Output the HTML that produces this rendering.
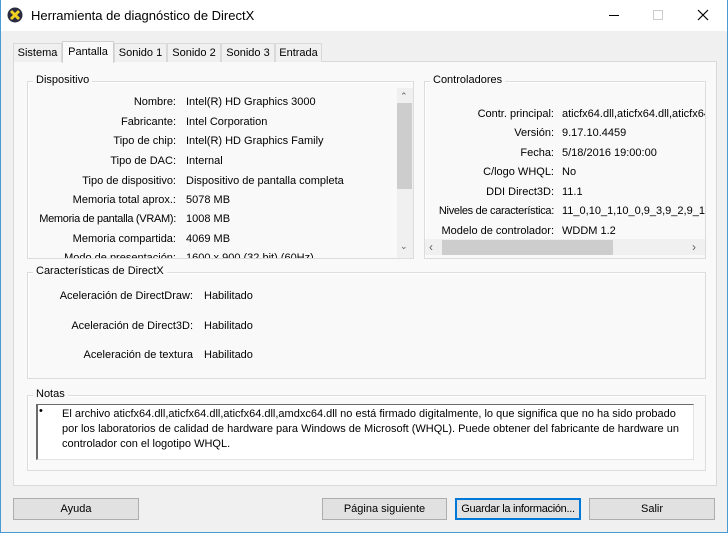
<!DOCTYPE html>
<html><head><meta charset="utf-8"><style>
*{margin:0;padding:0;box-sizing:border-box}
body{width:728px;height:533px;background:#f0f0f0;font-family:"Liberation Sans",sans-serif;font-size:11px;color:#000;position:relative;overflow:hidden;white-space:nowrap}
.a{position:absolute}
.win{left:0;top:0;width:728px;height:533px;border:1px solid #4a9ad6;border-top:none}
.title{left:1px;top:0;width:726px;height:31px;background:#fff}
.gb{position:absolute;border:1px solid #dcdcdc;box-shadow:inset 1px 1px 0 #fff}
.gbt{position:absolute;background:#f9f9f9;padding:0 3px;top:-8px;left:5px;font-size:11px}
.l{position:absolute;text-align:right;white-space:nowrap}
.v{position:absolute;white-space:nowrap}
.tab{position:absolute;top:43px;height:19px;border:1px solid #d9d9d9;border-bottom:none;background:#f0f0f0;padding:3px 0 0 0;text-align:center;font-size:11px;white-space:nowrap}
.btn{position:absolute;top:498px;height:22px;border:1px solid #adadad;background:#e1e1e1;text-align:center;line-height:20px;white-space:nowrap;font-size:11px}
.d{position:absolute;left:0;top:1px}
</style></head><body>
<div class="a win"></div>
<div class="a title"></div>
<svg class="a" style="left:7px;top:7px" width="16" height="16" viewBox="0 0 16 16"><circle cx="8" cy="8" r="7.5" fill="#2a2a40"/><path d="M4 4 L12 12 M12 4 L4 12" stroke="#f0d020" stroke-width="3"/></svg>
<div class="a" style="left:31px;top:8px;font-size:13px">Herramienta de diagnóstico de DirectX</div>
<div class="a" style="left:609px;top:15px;width:10px;height:1px;background:#000"></div>
<div class="a" style="left:653px;top:10px;width:10px;height:10px;border:1px solid #ccc"></div>
<svg class="a" style="left:697px;top:9px" width="12" height="12"><path d="M1 1L11 11M11 1L1 11" stroke="#000" stroke-width="1.2"/></svg>
<div class="a" style="left:13px;top:61px;width:704px;height:425px;border:1px solid #d9d9d9;background:#f9f9f9"></div>
<div class="tab" style="left:13px;width:49px">Sistema</div>
<div class="tab" style="left:62px;top:41px;height:22px;width:52px;background:#f9f9f9;border-color:#d0d0d0;padding-top:4px">Pantalla</div>
<div class="tab" style="left:114px;width:53px">Sonido 1</div>
<div class="tab" style="left:167px;width:54px">Sonido 2</div>
<div class="tab" style="left:221px;width:54px">Sonido 3</div>
<div class="tab" style="left:275px;width:47px">Entrada</div>
<div class="gb" style="left:27px;top:81px;width:387px;height:178px"><span class="gbt">Dispositivo</span></div>
<div class="a" style="left:28px;top:88px;width:368px;height:170px;overflow:hidden">
<div class="l" style="right:220px;top:8px">Nombre:</div><div class="v" style="left:158px;top:8px">Intel(R) HD Graphics 3000</div>
<div class="l" style="right:220px;top:28px">Fabricante:</div><div class="v" style="left:158px;top:28px">Intel Corporation</div>
<div class="l" style="right:220px;top:47px">Tipo de chip:</div><div class="v" style="left:158px;top:47px">Intel(R) HD Graphics Family</div>
<div class="l" style="right:220px;top:67px">Tipo de DAC:</div><div class="v" style="left:158px;top:67px">Internal</div>
<div class="l" style="right:220px;top:87px">Tipo de dispositivo:</div><div class="v" style="left:158px;top:87px">Dispositivo de pantalla completa</div>
<div class="l" style="right:220px;top:106px">Memoria total aprox.:</div><div class="v" style="left:158px;top:106px">5078 MB</div>
<div class="l" style="right:220px;top:125px;letter-spacing:-0.3px">Memoria de pantalla (VRAM):</div><div class="v" style="left:158px;top:125px">1008 MB</div>
<div class="l" style="right:220px;top:145px">Memoria compartida:</div><div class="v" style="left:158px;top:145px">4069 MB</div>
<div class="l" style="right:220px;top:164px">Modo de presentación:</div><div class="v" style="left:158px;top:164px">1600 x 900 (32 bit) (60Hz)</div>
</div>
<div class="a" style="left:397px;top:88px;width:16px;height:170px;background:#f0f0f0"></div>
<div class="a" style="left:397px;top:103px;width:15px;height:86px;background:#cdcdcd"></div>
<div class="a" style="left:400px;top:91px;font-size:9px;color:#606060">&#8963;</div>
<div class="a" style="left:400px;top:241px;font-size:9px;color:#606060">&#8964;</div>
<div class="gb" style="left:424px;top:81px;width:282px;height:178px"><span class="gbt">Controladores</span></div>
<div class="a" style="left:425px;top:88px;width:280px;height:151px;overflow:hidden">
<div class="l" style="right:151px;top:20px">Contr. principal:</div><div class="v" style="left:137px;top:20px">aticfx64.dll,aticfx64.dll,aticfx64.dll</div>
<div class="l" style="right:151px;top:39px">Versión:</div><div class="v" style="left:137px;top:39px">9.17.10.4459</div>
<div class="l" style="right:151px;top:59px">Fecha:</div><div class="v" style="left:137px;top:59px">5/18/2016 19:00:00</div>
<div class="l" style="right:151px;top:78px">C/logo WHQL:</div><div class="v" style="left:137px;top:78px">No</div>
<div class="l" style="right:151px;top:98px">DDI Direct3D:</div><div class="v" style="left:137px;top:98px">11.1</div>
<div class="l" style="right:151px;top:117px;letter-spacing:-0.3px">Niveles de característica:</div><div class="v" style="left:137px;top:117px">11_0,10_1,10_0,9_3,9_2,9_1</div>
<div class="l" style="right:151px;top:137px">Modelo de controlador:</div><div class="v" style="left:137px;top:137px">WDDM 1.2</div>
</div>
<div class="a" style="left:425px;top:239px;width:280px;height:16px;background:#f0f0f0"></div>
<div class="a" style="left:442px;top:240px;width:171px;height:15px;background:#cdcdcd"></div>
<div class="a" style="left:429px;top:240px;color:#606060;font-size:12px">&lsaquo;</div>
<div class="a" style="left:692px;top:240px;color:#606060;font-size:12px">&rsaquo;</div>
<div class="gb" style="left:27px;top:272px;width:679px;height:107px"><span class="gbt">Características de DirectX</span></div>
<div class="l" style="right:535px;top:290px">Aceleración de DirectDraw:</div><div class="v" style="left:204px;top:290px">Habilitado</div>
<div class="l" style="right:535px;top:320px">Aceleración de Direct3D:</div><div class="v" style="left:204px;top:320px">Habilitado</div>
<div class="l" style="right:535px;top:349px">Aceleración de textura</div><div class="v" style="left:204px;top:349px">Habilitado</div>
<div class="gb" style="left:27px;top:395px;width:679px;height:76px"><span class="gbt">Notas</span></div>
<div class="a" style="left:36px;top:404px;width:658px;height:56px;background:#fff;border:1px solid #e3e3e3;border-left:2px solid #6a6a6a;border-top:1px solid #6a6a6a"></div>
<div class="a" style="left:39px;top:405px">&bull;</div>
<div class="a" style="left:62px;top:407px;width:630px;line-height:15px;white-space:normal">El archivo aticfx64.dll,aticfx64.dll,aticfx64.dll,amdxc64.dll no está firmado digitalmente, lo que significa que no ha sido probado por los laboratorios de calidad de hardware para Windows de Microsoft (WHQL). Puede obtener del fabricante de hardware un controlador con el logotipo WHQL.</div>
<div class="btn" style="left:13px;width:126px">Ayuda</div>
<div class="btn" style="left:322px;width:125px">Página siguiente</div>
<div class="btn" style="left:455px;width:126px;border:1px solid #0078d7;box-shadow:inset 0 0 0 1px #0078d7;letter-spacing:-0.3px">Guardar la información...</div>
<div class="btn" style="left:589px;width:126px">Salir</div>
</body></html>
